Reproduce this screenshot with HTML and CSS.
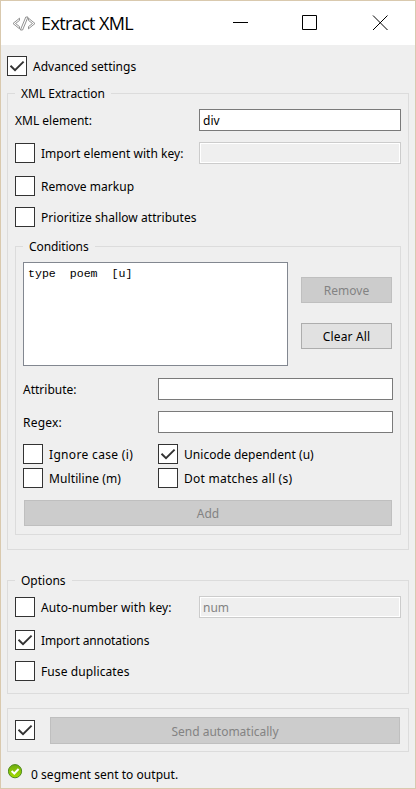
FILE: index.html
```html
<!DOCTYPE html>
<html lang="en">
<head>
<meta charset="utf-8">
<title>Extract XML</title>
<link rel="stylesheet" href="styles.css">
</head>
<body>
<svg width="0" height="0" class="defs"><symbol id="tick" viewBox="0 0 18 18"><path d="M2.500 8.800 L7 13.200 L15.600 4.600" fill="none" stroke="#333" stroke-width="1.900"/></symbol></svg>
<div class="window">
  <header class="titlebar">
    <svg class="app-icon" width="24" height="16" viewBox="0 0 24 16" fill="none" stroke="#777" stroke-width="0.8"><path d="M7.500 2.200 L1 7.500 L7.500 12.800 V10.600 L3.500 7.500 L7.500 4.400 Z M16.500 2.200 L23 7.500 L16.500 12.800 V10.600 L20.500 7.500 L16.500 4.400 Z M13.800 1 H16 L10.600 14 H8.400 Z"/></svg>
    <h1 class="title">Extract XML</h1>
    <svg class="controls" width="156" height="16" viewBox="0 0 156 16" fill="none" stroke="#000"><path d="M0 7.500 H15 M69.500 .5 H83.500 V14.500 H69.500 Z M140 .5 L154.500 15 M154.500 .5 L140 15"/></svg>
  </header>
  <main class="content">
    <label class="check advanced"><span class="box"><svg><use href="#tick"/></svg></span><span>Advanced settings</span></label>

    <section class="group extraction">
      <h2 class="legend">XML Extraction</h2>
      <div class="row"><span class="name">XML element:</span><div class="field"><span>div</span></div></div>
      <div class="row second"><label class="check name"><span class="box"></span><span class="t-key">Import element with key:</span></label><div class="field disabled"></div></div>
      <label class="check third"><span class="box"></span><span class="t-key">Remove markup</span></label>
      <label class="check fourth"><span class="box"></span><span class="t-key">Prioritize shallow attributes</span></label>

      <section class="group conditions">
        <h2 class="legend t-cond">Conditions</h2>
        <div class="list-row">
          <div class="list">type&nbsp; poem&nbsp; [u]</div>
          <div class="buttons"><div class="button off"><span>Remove</span></div><div class="button"><span class="t-clr">Clear All</span></div></div>
        </div>
        <div class="row"><span class="name">Attribute:</span><div class="field"></div></div>
        <div class="row regex"><span class="name t-reg">Regex:</span><div class="field"></div></div>
        <div class="flags">
          <label class="check"><span class="box"></span><span class="t-ign">Ignore case (i)</span></label>
          <label class="check"><span class="box"><svg><use href="#tick"/></svg></span><span class="t-key">Unicode dependent (u)</span></label>
          <label class="check"><span class="box"></span><span class="t-mul">Multiline (m)</span></label>
          <label class="check"><span class="box"></span><span class="t-dot">Dot matches all (s)</span></label>
        </div>
        <div class="button off add"><span>Add</span></div>
      </section>
    </section>

    <section class="group options">
      <h2 class="legend">Options</h2>
      <div class="row"><label class="check name"><span class="box"></span><span class="t-auto">Auto-number with key:</span></label><div class="field disabled"><span>num</span></div></div>
      <label class="check annotations"><span class="box"><svg><use href="#tick"/></svg></span><span class="t-ann">Import annotations</span></label>
      <label class="check fourth"><span class="box"></span><span class="t-mul">Fuse duplicates</span></label>
    </section>

    <section class="group send">
      <span class="box"><svg><use href="#tick"/></svg></span>
      <div class="button off"><span>Send automatically</span></div>
    </section>

    <footer class="status">
      <svg width="15" height="15" viewBox="0 0 15 15"><defs><linearGradient id="g" x2="0" y2="1"><stop stop-color="#6fae10"/><stop offset="1" stop-color="#a5dc00"/></linearGradient></defs><circle cx="7" cy="7.200" r="6.600" fill="url(#g)" stroke="#4f8a1c"/><path d="M3.600 7 L6.300 9.500 L10.600 5" fill="none" stroke="#fff" stroke-width="2"/></svg>
      <span class="t-stat">0 segment sent to output.</span>
    </footer>
  </main>
</div>
</body>
</html>
```
FILE: styles.css
```css
* { box-sizing: border-box; }
body { margin: 0; font: 12px/16px "Noto Sans", sans-serif; color: #000; }
h1, h2 { margin: 0; font: inherit; white-space: nowrap; }
span { white-space: nowrap; }
svg { display: block; flex: none; }
.defs { display: none; }

.window { width: 416px; height: 789px; border: 1px solid #d9c9ae; background: #efefef; overflow: hidden; }
.titlebar { height: 44px; background: #fff; display: flex; align-items: center; padding-left: 11px; }
.app-icon { margin-top: 1px; }
.title { width: 197px; margin-left: 5px; font: 18px/24px "Open Sans", sans-serif; letter-spacing: -0.62px; }
.controls { margin-left: -5px; }
.content { padding: 11px 6px 0; }

.check { display: flex; align-items: center; gap: 6px; height: 20px; }
.check > span:last-child, .row > span.name, .button > span { padding-top: 2px; }
.box { width: 20px; height: 20px; flex: none; border: 1px solid #333; background: #fff; }
.box svg { width: 18px; height: 18px; }

.group { border: 1px solid #dcdcdc; }
.legend { width: max-content; height: 16px; line-height: 18px; margin: -9px 0 8px; padding: 0 6px; background: #efefef; }
.extraction { height: 457px; margin-top: 17px; padding: 0 7px; }
.row { display: flex; height: 22px; align-items: center; }
.name { width: 184px; flex: none; }
.field { flex: 1; height: 22px; border: 1px solid #7a7a7a; background: #fff; padding: 3px 3px 0; }
.field.disabled { border-color: #ccc; background: #efefef; box-shadow: inset 0 0 0 1px #fff; color: #838383; }
.second { margin-top: 11px; }
.third { margin-top: 12px; }
.fourth { margin-top: 11px; }

.conditions { height: 289px; margin-top: 19px; padding: 0 7px; }
.list-row { display: flex; gap: 13px; }
.list { width: 265px; height: 104px; border: 1px solid #828790; background: #fff; padding: 3px 4px; font: 11.6px/16px "Liberation Mono", monospace; }
.buttons { width: 91px; padding-top: 15px; display: flex; flex-direction: column; gap: 20px; }
.button { height: 26px; border: 1px solid #adadad; background: #e1e1e1; display: flex; align-items: center; justify-content: center; }
.button.off { border-color: #bfbfbf; background: #ccc; color: #838383; }
.list-row + .row { margin-top: 12px; }
.conditions .name { width: 135px; }
.regex { margin-top: 11px; }
.flags { display: grid; grid-template-columns: 135px 1fr; row-gap: 4px; margin-top: 11px; }
.add { margin: 12px 1px 0; }

.options { height: 114px; margin-top: 30px; padding: 0 7px; }
.annotations { margin-top: 12px; }
.send { height: 44px; margin-top: 14px; padding: 8px 8px 0 7px; display: flex; gap: 15px; }
.send .box { margin-top: 3px; }
.send .button { flex: 1; height: 27px; }
.status { display: flex; gap: 8px; margin-top: 12px; padding-left: 1px; }
.status span { margin-top: 3px; }

.t-key, .t-stat { letter-spacing: 0.04px; }
.t-cond { letter-spacing: -0.1px; }
.t-clr { letter-spacing: 0.15px; }
.t-reg { letter-spacing: 0.2px; }
.t-ign { letter-spacing: 0.33px; }
.t-dot { letter-spacing: 0.25px; }
.t-mul, .t-auto { letter-spacing: 0.1px; }
.t-ann { letter-spacing: -0.1px; }
```
